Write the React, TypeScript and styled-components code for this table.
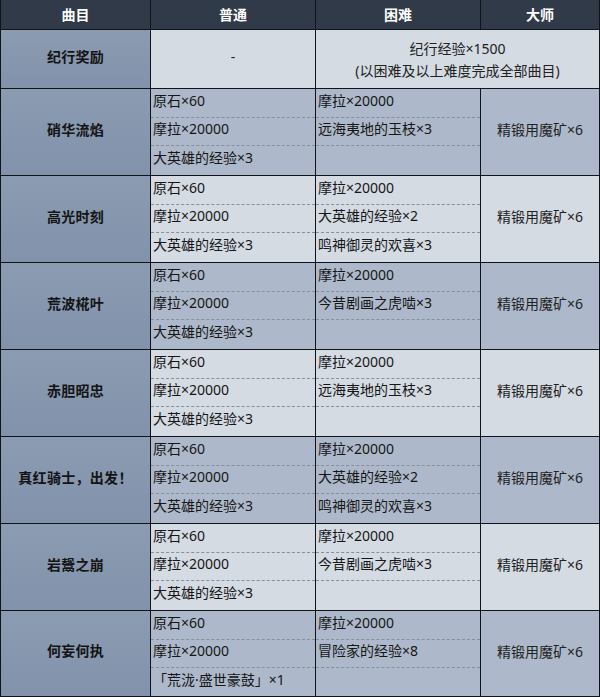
import React from "react";
import styled, { createGlobalStyle } from "styled-components";

const GlobalStyle = createGlobalStyle`
  html, body { margin: 0; padding: 0; background: #ffffff; }
  body { font-family: "Noto Sans", "Noto Sans CJK SC", sans-serif; }
`;

const Grid = styled.div`
  width: 600px;
  box-sizing: border-box;
  display: grid;
  grid-template-columns: 149px 164px 164px 118px;
  grid-template-rows: 29px 58px repeat(6, 86px) 85px;
  gap: 1px;
  padding: 0 1px 1px 1px;
  background: #101418;
  font-size: 14px;
  color: #161616;
`;

const HeadCell = styled.div`
  background: #303a49;
  color: #ffffff;
  font-weight: 700;
  font-size: 14px;
  display: flex;
  align-items: center;
  justify-content: center;
  line-height: 1;
  padding-top: 1px;
`;

const Label = styled.div`
  background: linear-gradient(180deg, #8b9bb2 0%, #8292aa 100%);
  font-weight: 700;
  font-size: 14px;
  display: flex;
  align-items: center;
  justify-content: center;
  color: #141414;
  letter-spacing: 0.3px;
  line-height: 1;
  padding-bottom: 5px;
`;

const Plain = styled.div<{ $dark?: boolean }>`
  background: ${(p) => (p.$dark ? "#adb9ca" : "#d5dbe3")};
  display: flex;
  align-items: center;
  justify-content: center;
  line-height: 1;
  padding-bottom: 4px;
  color: #222;
`;

const Reward = styled.div`
  background: #d5dbe3;
  grid-column: span 2;
  display: flex;
  flex-direction: column;
  align-items: center;
  justify-content: center;
  gap: 6px;
  line-height: 16px;
  padding-top: 1px;
  color: #222;
`;

const Stack = styled.div<{ $dark?: boolean }>`
  background: ${(p) => (p.$dark ? "#adb9ca" : "#d5dbe3")};
  display: grid;
  grid-template-rows: 28px 28px 1fr;
`;

const Item = styled.div`
  display: flex;
  align-items: center;
  padding: 0 0 5px 2px;
  white-space: nowrap;
  line-height: 1;
  & + & {
    border-top: 1px dashed #86909c;
  }
`;

type Song = {
  name: string;
  normal: string[];
  hard: string[];
};

const normalDefault = ["原石×60", "摩拉×20000", "大英雄的经验×3"];

const songs: Song[] = [
  { name: "硝华流焰", normal: normalDefault, hard: ["摩拉×20000", "远海夷地的玉枝×3", ""] },
  { name: "高光时刻", normal: normalDefault, hard: ["摩拉×20000", "大英雄的经验×2", "鸣神御灵的欢喜×3"] },
  { name: "荒波椛叶", normal: normalDefault, hard: ["摩拉×20000", "今昔剧画之虎啮×3", ""] },
  { name: "赤胆昭忠", normal: normalDefault, hard: ["摩拉×20000", "远海夷地的玉枝×3", ""] },
  { name: "真红骑士，出发！", normal: normalDefault, hard: ["摩拉×20000", "大英雄的经验×2", "鸣神御灵的欢喜×3"] },
  { name: "岩鬶之崩", normal: normalDefault, hard: ["摩拉×20000", "今昔剧画之虎啮×3", ""] },
  { name: "何妄何执", normal: ["原石×60", "摩拉×20000", "「荒泷·盛世豪鼓」×1"], hard: ["摩拉×20000", "冒险家的经验×8", ""] },
];

export default function App() {
  return (
    <>
      <GlobalStyle />
      <Grid>
        <HeadCell>曲目</HeadCell>
        <HeadCell>普通</HeadCell>
        <HeadCell>困难</HeadCell>
        <HeadCell>大师</HeadCell>

        <Label>纪行奖励</Label>
        <Plain>-</Plain>
        <Reward>
          <span>纪行经验×1500</span>
          <span>(以困难及以上难度完成全部曲目)</span>
        </Reward>

        {songs.map((s, i) => {
          const dark = i % 2 === 0;
          return (
            <React.Fragment key={s.name}>
              <Label>{s.name}</Label>
              <Stack $dark={dark}>
                {s.normal.map((t, j) => (
                  <Item key={j}>{t}</Item>
                ))}
              </Stack>
              <Stack $dark={dark}>
                {s.hard.map((t, j) => (
                  <Item key={j}>{t}</Item>
                ))}
              </Stack>
              <Plain $dark={dark}>精锻用魔矿×6</Plain>
            </React.Fragment>
          );
        })}
      </Grid>
    </>
  );
}
